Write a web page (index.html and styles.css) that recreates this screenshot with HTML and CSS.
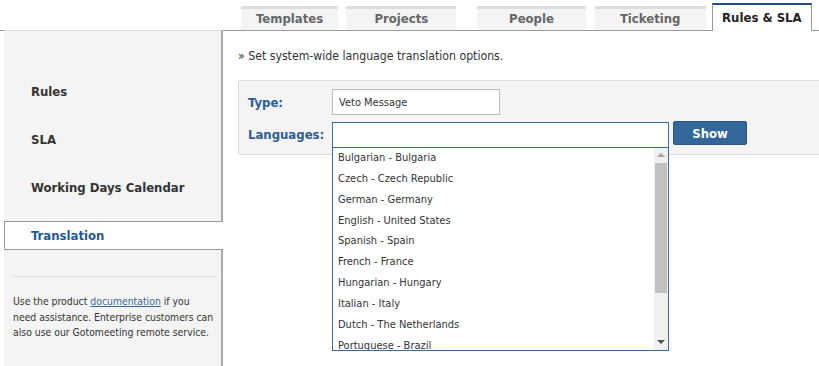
FILE: index.html
```html
<!DOCTYPE html>
<html lang="en">
<head>
  <meta charset="UTF-8" />
  <title>Rules &amp; SLA - Translation</title>
  <link rel="stylesheet" href="styles.css">
</head>
<body>

<div class="tabs">
  <a class="tab" href="#">Templates</a>
  <a class="tab" href="#">Projects</a>
  <a class="tab" href="#">People</a>
  <a class="tab" href="#">Ticketing</a>
  <a class="tab active" href="#">Rules &amp; SLA</a>
</div>

<div class="page">
  <div class="sidebar">
    <ul class="menu">
      <li><a href="#">Rules</a></li>
      <li><a href="#">SLA</a></li>
      <li><a href="#">Working Days Calendar</a></li>
      <li class="current"><a href="#">Translation</a></li>
    </ul>
    <div class="help">
      Use the product <a href="#">documentation</a> if you<br>
      need assistance. Enterprise customers can<br>
      also use our Gotomeeting remote service.
    </div>
  </div>

  <div class="main">
    <p class="intro">» Set system-wide language translation options.</p>

    <div class="panel">
      <div class="row">
        <label>Type:</label>
        <div class="field type-field">Veto Message</div>
      </div>
      <div class="row">
        <label>Languages:</label>
        <div class="combo">
          <div class="field lang-field"></div>
          <div class="dropdown">
            <ul class="options">
              <li>Bulgarian - Bulgaria</li>
              <li>Czech - Czech Republic</li>
              <li>German - Germany</li>
              <li>English - United States</li>
              <li>Spanish - Spain</li>
              <li>French - France</li>
              <li>Hungarian - Hungary</li>
              <li>Italian - Italy</li>
              <li>Dutch - The Netherlands</li>
              <li>Portuguese - Brazil</li>
            </ul>
            <div class="scrollbar">
              <span class="arrow up"></span>
              <span class="thumb"></span>
              <span class="arrow down"></span>
            </div>
          </div>
        </div>
        <button class="btn">Show</button>
      </div>
    </div>
  </div>
</div>

</body>
</html>
```

FILE: styles.css
```css
body {
  margin: 0;
  font-family: "DejaVu Sans Condensed", "DejaVu Sans", sans-serif;
  color: #333;
  background: #fff;
  height: 366px;
  overflow: hidden;
}

a {
  text-decoration: none;
}

/* top tabs */
.tabs {
  display: flex;
  align-items: flex-end;
  height: 31px;
  padding-left: 241px;
  border-bottom: 1px solid #999;
  box-sizing: border-box;
}

.tab {
  display: flex;
  align-items: center;
  justify-content: center;
  height: 24px;
  padding-bottom: 2px;
  box-sizing: border-box;
  margin-right: 7px;
  background: #f4f4f4;
  border-top: 3px solid #ddd;
  color: #666;
  font-weight: bold;
  font-size: 13px;
}

.tab:nth-child(1) { width: 98px; }
.tab:nth-child(2) { width: 111px; margin-right: 21px; margin-left: 1px; }
.tab:nth-child(3) { width: 109px; margin-right: 9px; }
.tab:nth-child(4) { width: 112px; margin-right: 6px; }

.tab.active {
  width: 101px;
  background: #fff;
  color: #222;
  border-top: 2px solid #1e4f8a;
  border-left: 1px solid #999;
  border-right: 1px solid #999;
  margin-bottom: -1px;
  height: 28px;
}

/* layout */
.page {
  display: flex;
  height: 335px;
}

.sidebar {
  width: 219px;
  margin-left: 4px;
  margin-top: -1px;
  background: #f4f4f4;
  border-top: 1px solid #ddd;
  border-right: 2px solid #aaa;
  box-sizing: border-box;
}

.menu {
  list-style: none;
  margin: 0;
  padding: 46px 0 0;
}

.menu li {
  height: 28px;
  margin-bottom: 20px;
  display: flex;
  align-items: center;
}

.menu li:nth-child(3) {
  margin-bottom: 0;
  height: 49px;
  align-items: flex-start;
  border-bottom: 1px solid #999;
  box-sizing: border-box;
}

.menu li:nth-child(3) a {
  margin-top: 7px;
}

.menu a {
  padding-left: 27px;
  font-weight: bold;
  font-size: 13px;
  color: #333;
}

.menu li.current {
  background: #fff;
  margin-right: -2px;
  border-left: 1px solid #999;
  border-bottom: 1px solid #999;
  height: 28px;
  margin-bottom: 0;
  box-sizing: border-box;
}

.menu li.current a {
  color: #1f5a9c;
  padding-left: 26px;
}

.help {
  margin: 26px 4px 0 9px;
  padding-top: 17px;
  border-top: 1px solid #ddd;
  font-size: 10.35px;
  line-height: 15.5px;
  white-space: nowrap;
  color: #333;
}

.help a {
  color: #3c64a0;
  text-decoration: underline;
}

.main {
  flex: 1;
  padding-left: 15px;
}

.intro {
  margin: 0;
  padding-top: 16px;
  height: 49px;
  box-sizing: border-box;
  font-size: 12.2px;
  line-height: 18px;
}

.panel {
  background: #f4f4f4;
  border: 1px solid #ddd;
  border-right: none;
  border-radius: 3px 0 0 3px;
  height: 75px;
  box-sizing: border-box;
  padding: 8px 0 0 9px;
}

.row {
  display: flex;
  align-items: center;
  height: 26px;
  margin-bottom: 7px;
}

.row label {
  width: 84px;
  font-weight: bold;
  font-size: 13px;
  color: #2a5d97;
}

.row + .row label {
  margin-top: -2px;
}

.field {
  height: 26px;
  box-sizing: border-box;
  background: #fff;
  border: 1px solid #bbb;
  font-size: 11px;
  padding-left: 6px;
  display: flex;
  align-items: center;
}

.type-field {
  width: 168px;
}

.combo {
  position: relative;
  width: 337px;
}

.lang-field {
  width: 337px;
  border: 1px solid #3a6aa8;
}

.dropdown {
  position: absolute;
  left: 0;
  top: 25px;
  width: 337px;
  height: 204px;
  box-sizing: border-box;
  background: #fff;
  border: 1px solid #3a6aa8;
  display: flex;
  overflow: hidden;
  z-index: 2;
}

.options {
  flex: 1;
  list-style: none;
  margin: 0;
  padding: 0;
}

.options li {
  height: 20.85px;
  line-height: 20.85px;
  padding-left: 5px;
  font-size: 11px;
  color: #333;
}

.scrollbar {
  width: 14px;
  background: #f0f0f0;
  position: relative;
}

.thumb {
  position: absolute;
  left: 1px;
  right: 1px;
  top: 15px;
  height: 130px;
  background: #c1c1c1;
}

.arrow {
  position: absolute;
  left: 3px;
  width: 0;
  height: 0;
  border-left: 4px solid transparent;
  border-right: 4px solid transparent;
}

.arrow.up {
  top: 5px;
  border-bottom: 4px solid #a3a3a3;
}

.arrow.down {
  bottom: 6px;
  border-top: 4px solid #505050;
}

.btn {
  margin-left: 4px;
  margin-top: -4px;
  width: 74px;
  height: 24px;
  background: #336699;
  border: 1px solid #2a5785;
  border-radius: 2px;
  color: #fff;
  font-family: inherit;
  font-weight: bold;
  font-size: 13px;
  cursor: pointer;
}
```
